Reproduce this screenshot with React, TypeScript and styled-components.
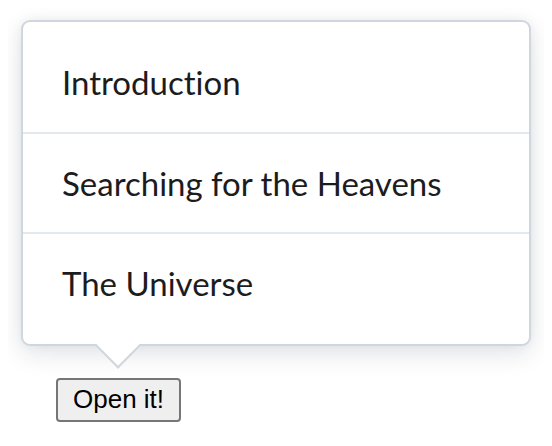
import React from "react";
import styled, { createGlobalStyle } from "styled-components";

const Global = createGlobalStyle`
  body {
    margin: 8px;
    background: #ffffff;
    font-family: Lato, "Noto Sans", sans-serif;
  }
`;

const Page = styled.div`
  display: flex;
  flex-direction: column;
  align-items: flex-start;
  padding: 12px 0 0 13px;
`;

const Popover = styled.div`
  position: relative;
  box-sizing: border-box;
  width: 510px;
  padding: 10px 0 12px;
  background: #ffffff;
  border: 2px solid #cfd6de;
  border-radius: 9px;
  box-shadow: 0 8px 24px rgba(20, 30, 50, 0.12), 0 0 12px rgba(20, 30, 50, 0.05);
`;

const Arrow = styled.span`
  position: absolute;
  left: 79px;
  bottom: -18px;
  width: 32px;
  height: 32px;
  box-sizing: border-box;
  background: #ffffff;
  border-right: 2px solid #cfd6de;
  border-bottom: 2px solid #cfd6de;
  transform: rotate(45deg);
`;

const List = styled.ul`
  list-style: none;
  margin: 0;
  padding: 0;
`;

const Item = styled.li`
  display: flex;
  align-items: center;
  box-sizing: border-box;
  height: 100px;
  padding: 0 39px;
  font-size: 33px;
  font-variant-ligatures: none;
  color: #1c1c1e;
  & + & {
    border-top: 2px solid #e3e8ef;
  }
`;

const Trigger = styled.button`
  margin: 32px 0 0 35px;
  padding: 4px 15px 5px;
  font-family: "Liberation Sans", Arial, sans-serif;
  font-size: 26px;
  color: #000000;
  background: #efefef;
  border: 2px solid #767676;
  border-radius: 4px;
`;

const items = ["Introduction", "Searching for the Heavens", "The Universe"];

export default function App() {
  return (
    <>
      <Global />
      <Page>
        <Popover>
          <List>
            {items.map((t) => (
              <Item key={t}>{t}</Item>
            ))}
          </List>
          <Arrow />
        </Popover>
        <Trigger>Open it!</Trigger>
      </Page>
    </>
  );
}
